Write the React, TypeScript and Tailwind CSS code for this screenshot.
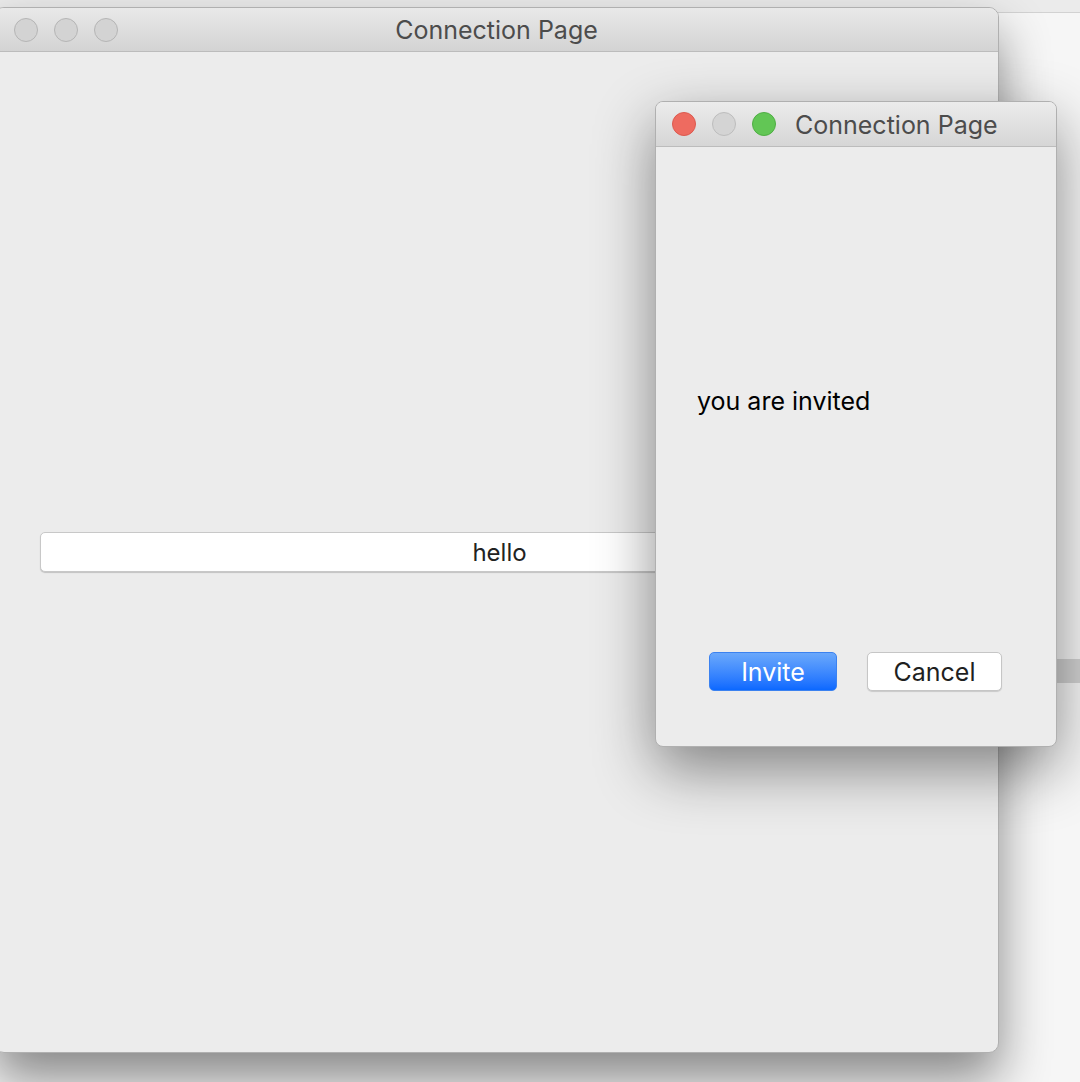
import React from 'react';

const font = { fontFamily: 'Inter, "Liberation Sans", Arial, sans-serif' };

function TrafficLights({ active }: { active: boolean }) {
  if (!active) {
    return (
      <div className="flex items-center gap-[16px]">
        <span className="block h-[24px] w-[24px] rounded-full border border-[#b5b5b5] bg-[#d3d3d3]" />
        <span className="block h-[24px] w-[24px] rounded-full border border-[#b5b5b5] bg-[#d3d3d3]" />
        <span className="block h-[24px] w-[24px] rounded-full border border-[#b5b5b5] bg-[#d3d3d3]" />
      </div>
    );
  }
  return (
    <div className="flex items-center gap-[16px]">
      <span className="block h-[24px] w-[24px] rounded-full border border-[#dc5a4f] bg-[#ee6b60]" />
      <span className="block h-[24px] w-[24px] rounded-full border border-[#bdbdbd] bg-[#d4d4d4]" />
      <span className="block h-[24px] w-[24px] rounded-full border border-[#4fae44] bg-[#62c655]" />
    </div>
  );
}

export default function App() {
  return (
    <div
      className="relative h-[1082px] w-[1080px] overflow-hidden bg-[#f6f6f6]"
      style={font}
    >
      {/* desktop behind windows */}
      <div className="h-[13px] border-b border-[#d2d2d2] bg-[#ebebeb]" />
      <div className="absolute left-[1000px] top-[659px] h-[24px] w-[80px] bg-[#d2d2d2]" />

      {/* Main window */}
      <div className="absolute left-[-6px] top-[7px] flex h-[1046px] w-[1005px] flex-col overflow-hidden rounded-[10px] border border-[#b0b0b0] bg-[#ececec] shadow-[0_26px_50px_rgba(0,0,0,0.45)]">
        <div className="relative flex h-[44px] shrink-0 items-center border-b border-[#bcbcbc] bg-gradient-to-b from-[#e9e9e9] to-[#d3d3d3] pl-[19px]">
          <TrafficLights active={false} />
          <div className="absolute inset-0 flex items-center justify-center pt-[3px] text-[25px] text-[#4c4c4c]">
            Connection Page
          </div>
        </div>
        <div className="flex flex-1 items-center pl-[45px] pr-[39px]">
          <div className="flex h-[40px] w-full items-center justify-center rounded-[5px] border border-[#c8c8c8] bg-white pt-[2px] text-[24px] text-[#222] shadow-[0_1px_1px_rgba(0,0,0,0.18)]">
            hello
          </div>
        </div>
      </div>

      {/* Dialog window */}
      <div className="absolute left-[655px] top-[101px] flex h-[646px] w-[402px] flex-col overflow-hidden rounded-[8px] border border-[#b0b0b0] bg-[#ececec] shadow-[0_22px_60px_rgba(0,0,0,0.45)]">
        <div className="flex h-[45px] shrink-0 items-center border-b border-[#bcbcbc] bg-gradient-to-b from-[#ececec] to-[#d6d6d6] pl-[16px]">
          <TrafficLights active />
          <span className="ml-[19px] pt-[3px] text-[25px] text-[#4c4c4c]">Connection Page</span>
        </div>
        <div className="flex flex-1 items-center pl-[41px] pt-[4px] text-[25px] text-black">
          you are invited
        </div>
        <div className="flex shrink-0 gap-[30px] pb-[55px] pl-[53px]">
          <button className="flex h-[39px] w-[128px] items-center justify-center rounded-[5px] border border-[#3b82f0] bg-gradient-to-b from-[#6aa8fb] to-[#0a68ff] pt-[2px] text-[25px] text-white">
            Invite
          </button>
          <button className="flex h-[39px] w-[135px] items-center justify-center rounded-[5px] border border-[#c6c6c6] bg-white pt-[2px] text-[25px] text-[#1f1f1f] shadow-[0_1px_1px_rgba(0,0,0,0.15)]">
            Cancel
          </button>
        </div>
      </div>
    </div>
  );
}
